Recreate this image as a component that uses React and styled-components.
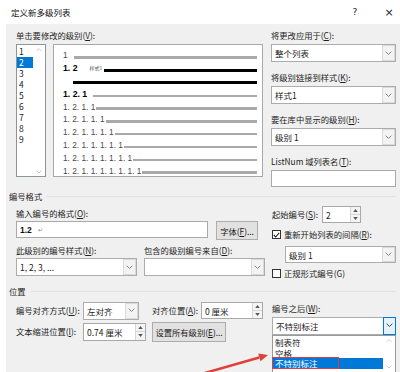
import React from "react";
import styled, { createGlobalStyle } from "styled-components";

const GlobalStyle = createGlobalStyle`
  html, body { margin: 0; padding: 0; background: #ffffff; }
  body {
    font-family: "Noto Sans CJK SC", "Microsoft YaHei", sans-serif;
    font-size: 8.3px;
    color: #1a1a1a;
  }
  * { box-sizing: border-box; }
`;

const Dialog = styled.div`
  position: relative;
  width: 400px;
  height: 372px;
  overflow: hidden;
  display: flex;
  flex-direction: column;
  background: #ffffff;
`;

const TitleBar = styled.div`
  height: 24px;
  flex: none;
  display: flex;
  align-items: center;
  padding-left: 11px;
  font-size: 8.5px;
  color: #111;
`;

const TitleButtons = styled.div`
  margin-left: auto;
  display: flex;
  align-items: center;
`;

const TitleBtn = styled.div`
  width: ${(p) => p.$w}px;
  text-align: center;
  font-size: ${(p) => p.$fs}px;
  color: #222;
  font-family: "DejaVu Sans", sans-serif;
`;

const Body = styled.div`
  flex: 1;
  margin-left: 6px;
  background: #f0f0f0;
  padding: 6px 4px 0 10px;
`;

const Top = styled.div`
  display: flex;
  gap: 8px;
`;

const Column = styled.div`
  width: ${(p) => p.$w}px;
  display: flex;
  flex-direction: column;
  flex: none;
`;

const Label = styled.div`
  height: 11px;
  line-height: 11px;
  white-space: nowrap;
  color: #1e1e1e;
  margin-top: ${(p) => p.$mt || 0}px;
  margin-bottom: ${(p) => p.$mb || 0}px;
  margin-left: ${(p) => p.$ml || 0}px;
  width: ${(p) => (p.$w ? `${p.$w}px` : "auto")};
  flex: none;
`;

const U = styled.span`
  text-decoration: underline;
`;

const LevelRow = styled.div`
  display: flex;
  gap: 7px;
`;

const LevelList = styled.div`
  width: 30px;
  height: 133px;
  border: 1px solid #8f949b;
  background: #fff;
  display: flex;
`;

const LevelItems = styled.div`
  width: 16px;
  padding-top: 1px;
`;

const LevelItem = styled.div`
  height: 11px;
  line-height: 11px;
  padding-left: 2px;
  font-size: 8.5px;
  background: ${(p) => (p.$sel ? "#0078d7" : "transparent")};
  color: ${(p) => (p.$sel ? "#fff" : "#222")};
`;

const ScrollTrack = styled.div`
  flex: 1;
  display: flex;
  flex-direction: column;
  justify-content: space-between;
  align-items: center;
  padding: 3px 0 2px;
`;

const Preview = styled.div`
  width: 210px;
  height: 133px;
  border: 1px solid #a8a8a8;
  background: #fff;
  padding: 4px 5px 0 9px;
  display: flex;
  flex-direction: column;
`;

const PRow = styled.div`
  height: 12.8px;
  display: flex;
  align-items: center;
  flex: none;
`;

const PNum = styled.span`
  font-family: "Liberation Sans", Arial, sans-serif;
  font-size: ${(p) => (p.$bold ? 8.7 : 8.3)}px;
  font-weight: ${(p) => (p.$bold ? 700 : 400)};
  color: ${(p) => (p.$bold ? "#000" : "#4a4a4a")};
  white-space: pre;
  line-height: 12px;
`;

const PStyleTag = styled.span`
  font-size: 5px;
  color: #555;
  margin-left: 12px;
  line-height: 8px;
`;

const PLine = styled.div`
  flex: 1;
  height: ${(p) => (p.$dark ? 3 : 2.5)}px;
  margin-top: 4px;
  margin-left: ${(p) => p.$gap}px;
  background: ${(p) => (p.$dark ? "#000" : "#a9a9a9")};
`;

const Select = styled.div`
  height: ${(p) => p.$h || 18}px;
  width: ${(p) => (p.$w ? `${p.$w}px` : "100%")};
  margin-left: ${(p) => p.$ml || 0}px;
  margin-top: ${(p) => p.$mt || 0}px;
  border: 1px solid #acacac;
  background: #fff;
  display: flex;
  flex: none;
`;

const SelectText = styled.div`
  flex: 1;
  padding-left: 3px;
  display: flex;
  align-items: center;
  white-space: nowrap;
  font-size: 8.5px;
  color: #1a1a1a;
`;

const ChevronBox = styled.div`
  width: 13px;
  display: flex;
  align-items: center;
  justify-content: center;
  background: ${(p) => (p.$active ? "#e5f1fb" : "#f3f3f3")};
  border: 1px solid ${(p) => (p.$active ? "#0078d7" : "#dadada")};
  margin: ${(p) => (p.$active ? "-1px -1px -1px 0" : "0")};
`;

const Group = styled.div`
  display: flex;
  flex-direction: column;
  margin-bottom: 10px;
`;

const TextInput = styled.div`
  height: ${(p) => p.$h || 17}px;
  width: ${(p) => (p.$w ? `${p.$w}px` : "100%")};
  border: 1px solid #a9a9a9;
  background: #fff;
  display: flex;
  align-items: center;
  padding-left: 3px;
  flex: none;
`;

const InputBold = styled.span`
  font-family: "Liberation Sans", Arial, sans-serif;
  font-weight: 700;
  font-size: 8.5px;
  color: #111;
`;

const ReturnMark = styled.span`
  font-size: 6px;
  color: #888;
  margin-left: 6px;
`;

const SectionHeader = styled.div`
  display: flex;
  align-items: center;
  margin-left: -7px;
  margin-top: ${(p) => p.$mt}px;
  height: 11px;
  line-height: 11px;
  color: #1e1e1e;
`;

const HeaderRule = styled.div`
  flex: 1;
  height: 1px;
  background: #e2e2e2;
  margin-left: 4px;
`;

const Mid = styled.div`
  display: flex;
  gap: 7px;
  align-items: flex-start;
`;

const InputRow = styled.div`
  display: flex;
  gap: 8px;
  align-items: flex-start;
`;

const Button = styled.div`
  width: ${(p) => p.$w}px;
  height: ${(p) => p.$h}px;
  margin-left: ${(p) => p.$ml || 0}px;
  flex: none;
  background: #e1e1e1;
  border: 1px solid #adadad;
  display: flex;
  align-items: center;
  justify-content: center;
  white-space: nowrap;
  color: #1a1a1a;
`;

const PairGrid = styled.div`
  display: grid;
  grid-template-columns: 121px 121px;
  column-gap: 7px;
  row-gap: 2px;
  margin-top: 5px;
`;

const InlineRow = styled.div`
  display: flex;
  align-items: center;
  height: ${(p) => p.$h}px;
  margin-top: ${(p) => p.$mt || 0}px;
  gap: ${(p) => p.$gap || 0}px;
  flex: none;
`;

const Spinner = styled.div`
  width: ${(p) => p.$w}px;
  height: ${(p) => p.$h}px;
  border: 1px solid #a9a9a9;
  background: #fff;
  display: flex;
  flex: none;
`;

const SpinText = styled.div`
  flex: 1;
  display: flex;
  align-items: center;
  padding-left: 3px;
  font-size: 8.5px;
  white-space: nowrap;
`;

const SpinButtons = styled.div`
  width: 10px;
  display: flex;
  flex-direction: column;
  border-left: 1px solid #d6d6d6;
`;

const SpinHalf = styled.div`
  flex: 1;
  display: flex;
  align-items: center;
  justify-content: center;
  background: #f4f4f4;
  border-top: ${(p) => (p.$bottom ? "1px solid #d6d6d6" : "none")};
`;

const Check = styled.div`
  width: 9px;
  height: 9px;
  border: 1px solid #333;
  background: #fff;
  display: flex;
  align-items: center;
  justify-content: center;
  flex: none;
`;

const Bottom = styled.div`
  display: flex;
  gap: 7px;
  align-items: flex-start;
`;

const Dropdown = styled.div`
  position: absolute;
  left: 272px;
  top: 335px;
  width: 124px;
  height: 40px;
  background: #fff;
  border: 1px solid #9a9a9a;
  display: flex;
`;

const DropItems = styled.div`
  flex: 1;
  padding-top: 1px;
`;

const DropItem = styled.div`
  height: 10.7px;
  line-height: 10.7px;
  padding-left: 2px;
  font-size: 8.5px;
  background: ${(p) => (p.$sel ? "#0078d7" : "transparent")};
  color: ${(p) => (p.$sel ? "#fff" : "#1a1a1a")};
`;

const DropScroll = styled.div`
  width: 12px;
  display: flex;
  flex-direction: column;
  justify-content: space-between;
  align-items: center;
  padding: 3px 0 5px;
`;

const RedBox = styled.div`
  position: absolute;
  left: 272px;
  top: 357px;
  width: 67px;
  height: 12px;
  border: 1.5px solid #d2404b;
`;

const ArrowSvg = styled.svg`
  position: absolute;
  left: 195px;
  top: 340px;
`;

const Chevron = ({ up, color = "#6a6a6a", size = 7 }) => (
  <svg width={size} height={size * 0.6} viewBox="0 0 10 6">
    <polyline
      points={up ? "1,5 5,1 9,5" : "1,1 5,5 9,1"}
      fill="none"
      stroke={color}
      strokeWidth="1.3"
    />
  </svg>
);

const Tri = ({ up }) => (
  <svg width="5" height="3" viewBox="0 0 6 4">
    <polygon points={up ? "0,4 3,0 6,4" : "0,0 6,0 3,4"} fill="#555" />
  </svg>
);

const SelectBox = ({ children, active, ...rest }) => (
  <Select {...rest}>
    <SelectText>{children}</SelectText>
    <ChevronBox $active={active}>
      <Chevron color={active ? "#333" : "#777"} />
    </ChevronBox>
  </Select>
);

const SpinBox = ({ children, ...rest }) => (
  <Spinner {...rest}>
    <SpinText>{children}</SpinText>
    <SpinButtons>
      <SpinHalf>
        <Tri up />
      </SpinHalf>
      <SpinHalf $bottom>
        <Tri />
      </SpinHalf>
    </SpinButtons>
  </Spinner>
);

const previewRows = [
  { num: "1", gap: 6 },
  { num: "1. 2", bold: true, tag: true, gap: 2, dark: true },
  { num: "", gap: 10, dark: true },
  { num: "1. 2. 1", bold: true, gap: 6 },
  { num: "1. 2. 1. 1", gap: 1 },
  { num: "1. 2. 1. 1. 1", gap: 1 },
  { num: "1. 2. 1. 1. 1. 1", gap: 1 },
  { num: "1. 2. 1. 1. 1. 1. 1", gap: 1 },
  { num: "1. 2. 1. 1. 1. 1. 1. 1", gap: 1 },
  { num: "1. 2. 1. 1. 1. 1. 1. 1. 1", gap: 1 },
];

export default function App() {
  return (
    <>
      <GlobalStyle />
      <Dialog>
        <TitleBar>
          定义新多级列表
          <TitleButtons>
            <TitleBtn $w={20} $fs={9}>?</TitleBtn>
            <TitleBtn $w={13} />
            <TitleBtn $w={22} $fs={11}>×</TitleBtn>
          </TitleButtons>
        </TitleBar>
        <Body>
          <Top>
            <Column $w={247}>
              <Label $mb={3}>
                单击要修改的级别(<U>V</U>):
              </Label>
              <LevelRow>
                <LevelList>
                  <LevelItems>
                    {[1, 2, 3, 4, 5, 6, 7, 8, 9].map((n) => (
                      <LevelItem key={n} $sel={n === 2}>
                        {n}
                      </LevelItem>
                    ))}
                  </LevelItems>
                  <ScrollTrack>
                    <Chevron up color="#b8b8b8" size={6} />
                    <Chevron color="#b8b8b8" size={6} />
                  </ScrollTrack>
                </LevelList>
                <Preview>
                  {previewRows.map((r, i) => (
                    <PRow key={i}>
                      {r.num && <PNum $bold={r.bold}>{r.num}</PNum>}
                      {r.tag && <PStyleTag>样式1</PStyleTag>}
                      <PLine $gap={r.gap} $dark={r.dark} />
                    </PRow>
                  ))}
                </Preview>
              </LevelRow>
            </Column>
            <Column $w={125}>
              <Group>
                <Label $mb={3}>
                  将更改应用于(<U>C</U>):
                </Label>
                <SelectBox>整个列表</SelectBox>
              </Group>
              <Group>
                <Label $mb={3}>
                  将级别链接到样式(<U>K</U>):
                </Label>
                <SelectBox>样式1</SelectBox>
              </Group>
              <Group>
                <Label $mb={3}>
                  要在库中显示的级别(<U>H</U>):
                </Label>
                <SelectBox>级别 1</SelectBox>
              </Group>
              <Group>
                <Label $mb={3}>
                  ListNum 域列表名(<U>T</U>):
                </Label>
                <TextInput />
              </Group>
            </Column>
          </Top>

          <SectionHeader $mt={-6}>
            编号格式
            <HeaderRule />
          </SectionHeader>

          <Mid>
            <Column $w={249}>
              <Label $mt={6} $mb={2}>
                输入编号的格式(<U>O</U>):
              </Label>
              <InputRow>
                <TextInput $w={192}>
                  <InputBold>1.2</InputBold>
                  <ReturnMark>↵</ReturnMark>
                </TextInput>
                <Button $w={42} $h={19}>
                  字体(<U>F</U>)...
                </Button>
              </InputRow>
              <PairGrid>
                <Label>
                  此级别的编号样式(<U>N</U>):
                </Label>
                <Label>
                  包含的级别编号来自(<U>D</U>):
                </Label>
                <SelectBox>1, 2, 3, ...</SelectBox>
                <SelectBox />
              </PairGrid>
            </Column>
            <Column $w={124}>
              <InlineRow $h={17} $mt={4}>
                <Label $w={50}>
                  起始编号(<U>S</U>):
                </Label>
                <SpinBox $w={39} $h={17}>
                  2
                </SpinBox>
              </InlineRow>
              <InlineRow $h={11} $mt={6} $gap={3}>
                <Check>
                  <svg width="7" height="6" viewBox="0 0 7 6">
                    <polyline points="0.8,3 2.7,5 6.2,0.8" fill="none" stroke="#222" strokeWidth="1.1" />
                  </svg>
                </Check>
                <Label>
                  重新开始列表的间隔(<U>R</U>):
                </Label>
              </InlineRow>
              <SelectBox $h={17} $w={111} $ml={13} $mt={6}>
                级别 1
              </SelectBox>
              <InlineRow $h={11} $mt={4.5} $gap={3}>
                <Check />
                <Label>正规形式编号(G)</Label>
              </InlineRow>
            </Column>
          </Mid>

          <SectionHeader $mt={7.5}>
            位置
            <HeaderRule />
          </SectionHeader>

          <Bottom>
            <Column $w={249}>
              <InlineRow $h={18} $mt={4.5}>
                <Label $w={67}>
                  编号对齐方式(<U>U</U>):
                </Label>
                <SelectBox $w={56}>左对齐</SelectBox>
                <Label $w={49} $ml={13}>
                  对齐位置(<U>A</U>):
                </Label>
                <SpinBox $w={62} $h={17}>
                  0 厘米
                </SpinBox>
              </InlineRow>
              <InlineRow $h={20} $mt={2}>
                <Label $w={67}>
                  文本缩进位置(<U>I</U>):
                </Label>
                <SpinBox $w={63} $h={18}>
                  0.74 厘米
                </SpinBox>
                <Button $w={74} $h={20} $ml={6}>
                  设置所有级别(<U>E</U>)...
                </Button>
              </InlineRow>
            </Column>
            <Column $w={124}>
              <Label $mt={6} $mb={2.5}>
                编号之后(<U>W</U>):
              </Label>
              <SelectBox active>不特别标注</SelectBox>
            </Column>
          </Bottom>
        </Body>

        <Dropdown>
          <DropItems>
            <DropItem>制表符</DropItem>
            <DropItem>空格</DropItem>
            <DropItem $sel>不特别标注</DropItem>
          </DropItems>
          <DropScroll>
            <Chevron up color="#c0c0c0" size={6} />
            <Chevron color="#c0c0c0" size={6} />
          </DropScroll>
        </Dropdown>
        <RedBox />
        <ArrowSvg width="80" height="35" viewBox="0 0 80 35">
          <line x1="10" y1="33" x2="64.3" y2="17.5" stroke="#e0403a" strokeWidth="2.4" />
          <polygon points="73,15 65.5,21.3 63.2,13.6" fill="#e0403a" />
        </ArrowSvg>
      </Dialog>
    </>
  );
}
